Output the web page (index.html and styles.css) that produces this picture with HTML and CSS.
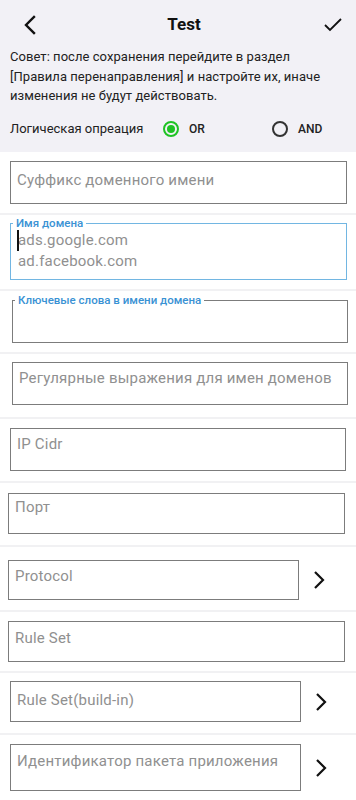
FILE: index.html
```html
<!DOCTYPE html>
<html lang="ru">
<head>
<meta charset="utf-8">
<title>Test</title>
<link rel="stylesheet" href="styles.css">
</head>
<body>
<div class="top">
  <div class="bar">
    <svg class="icon back" width="24" height="24" viewBox="0 0 24 24"><path d="M15 4 L7 12 L15 20" fill="none" stroke="#111" stroke-width="2.4" stroke-linecap="square"/></svg>
    <div class="title">Test</div>
    <svg class="icon check" width="24" height="24" viewBox="0 0 24 24"><path d="M4 13 L9 18 L20 7" fill="none" stroke="#111" stroke-width="1.8"/></svg>
  </div>
  <p class="tip">Совет: после сохранения перейдите в раздел [Правила перенаправления] и настройте их, иначе изменения не будут действовать.</p>
  <div class="logic">
    <span class="logic-label">Логическая опреация</span>
    <span class="opt opt-or"><span class="radio on"></span><span class="opt-text">OR</span></span>
    <span class="opt opt-and"><span class="radio"></span><span class="opt-text">AND</span></span>
  </div>
</div>
<div class="list">
  <div class="row r1"><div class="box"><span class="ph">Суффикс доменного имени</span></div></div>
  <div class="row r2">
    <fieldset class="fs focus">
      <legend>Имя домена</legend>
      <div class="lines"><span class="caret"></span><div class="ph">ads.google.com</div><div class="ph">ad.facebook.com</div></div>
    </fieldset>
  </div>
  <div class="row r3">
    <fieldset class="fs">
      <legend>Ключевые слова в имени домена</legend>
    </fieldset>
  </div>
  <div class="row r4"><div class="box"><span class="ph">Регулярные выражения для имен доменов</span></div></div>
  <div class="row r5"><div class="box"><span class="ph">IP Cidr</span></div></div>
  <div class="row r6"><div class="box"><span class="ph">Порт</span></div></div>
  <div class="row r7 sel"><div class="box"><span class="ph">Protocol</span></div><svg class="chev" width="16" height="20" viewBox="0 0 16 20"><path d="M4 2 L12 10 L4 18" fill="none" stroke="#111" stroke-width="2.2"/></svg></div>
  <div class="row r8"><div class="box"><span class="ph">Rule Set</span></div></div>
  <div class="row r9 sel"><div class="box"><span class="ph">Rule Set(build-in)</span></div><svg class="chev" width="16" height="20" viewBox="0 0 16 20"><path d="M4 2 L12 10 L4 18" fill="none" stroke="#111" stroke-width="2.2"/></svg></div>
  <div class="row r10 sel"><div class="box"><span class="ph">Идентификатор пакета приложения</span></div><svg class="chev" width="16" height="20" viewBox="0 0 16 20"><path d="M4 2 L12 10 L4 18" fill="none" stroke="#111" stroke-width="2.2"/></svg></div>
</div>
</body>
</html>
```

FILE: styles.css
```css
* { box-sizing: border-box; }
html, body { margin: 0; padding: 0; }
body {
  width: 356px;
  font-family: Roboto, "Noto Sans", sans-serif;
  background: #fff;
  color: #1a1a1a;
}
.top {
  background: #f2f1f6;
  height: 152px;
  padding: 0 10px;
}
.bar {
  height: 47px;
  display: flex;
  align-items: center;
  justify-content: space-between;
  padding: 0 0 0 9px;
}
.title {
  font-size: 17px;
  font-weight: 700;
  color: #111;
  padding-left: 4px;
}
.icon.back { margin-top: 2px; }
.icon.check { margin-right: 1px; margin-top: 1px; }
.tip {
  margin: 0;
  font-size: 13px;
  line-height: 19.5px;
  color: #222;
  letter-spacing: 0.05px;
}
.logic {
  display: flex;
  align-items: center;
  margin-top: 14px;
  height: 18px;
  font-size: 13px;
  color: #222;
}
.logic-label { width: 153px; }
.opt { display: flex; align-items: center; }
.opt-or { width: 109px; }
.opt-text { font-size: 12px; font-weight: 500; margin-left: 10px; color: #222; }
.radio {
  width: 16px; height: 16px;
  border-radius: 50%;
  border: 2px solid #333;
  display: inline-block;
  position: relative;
}
.radio.on { border-color: #1fc324; }
.radio.on::after {
  content: "";
  position: absolute;
  left: 2px; top: 2px;
  width: 8px; height: 8px;
  border-radius: 50%;
  background: #1fc324;
}
.row {
  display: flex;
  align-items: center;
  border-bottom: 2px solid #f1f1f3;
  padding: 9px 9px 9px 10px;
}
.box {
  flex: 1;
  height: 43px;
  border: 1.5px solid #7c7c7c;
  padding: 8px 6px 0;
}
.ph {
  font-size: 15px;
  line-height: 18px;
  color: #909090;
  letter-spacing: 0.2px;
  white-space: nowrap;
}
.fs {
  flex: 1;
  margin: 0;
  padding: 0 6px;
  border: 1.5px solid #7c7c7c;
  min-width: 0;
}
.fs legend {
  font-size: 11.5px;
  line-height: 14px;
  font-weight: 500;
  color: #3a92d4;
  padding: 0 3px;
  margin-left: -4px;
}
.fs.focus { border-color: #72b6e2; height: 64px; }
.r2 { padding-top: 1px; }
.r3 { padding-top: 2px; padding-left: 12px; padding-right: 8px; }
.r3 .fs { height: 50px; }
.r4 { padding-left: 12px; padding-right: 8px; padding-top: 8px; padding-bottom: 12px; }
.r4 .box { padding-top: 5px; }
.r5 { padding-right: 10px; padding-bottom: 10px; }
.r5 .box { padding-top: 5px; }
.r6 { padding-left: 8px; padding-right: 11px; padding-top: 10px; padding-bottom: 11px; }
.r6 .box { height: 41px; padding-top: 3px; }
.r7 { padding-left: 8px; padding-top: 13px; padding-bottom: 10px; }
.r7 .box { height: 40px; padding-top: 5px; }
.r8 { padding-left: 8px; padding-right: 11px; }
.r8 .box { height: 41px; padding-top: 6px; }
.r9 { padding-top: 8px; padding-bottom: 11px; }
.r9 .box { height: 41px; padding-top: 8px; }
.r10 { border-bottom: none; }
.r10 .box { height: 47px; padding-top: 6px; }
.sel .box { flex: 0 0 291px; }
.chev { margin-left: 12px; }
.lines { position: relative; padding-top: 0; padding-left: 1px; }
.lines .ph { line-height: 21px; display: block; }
.caret {
  position: absolute;
  left: 0; top: 0;
  width: 2px; height: 21px;
  background: #111;
}
```
